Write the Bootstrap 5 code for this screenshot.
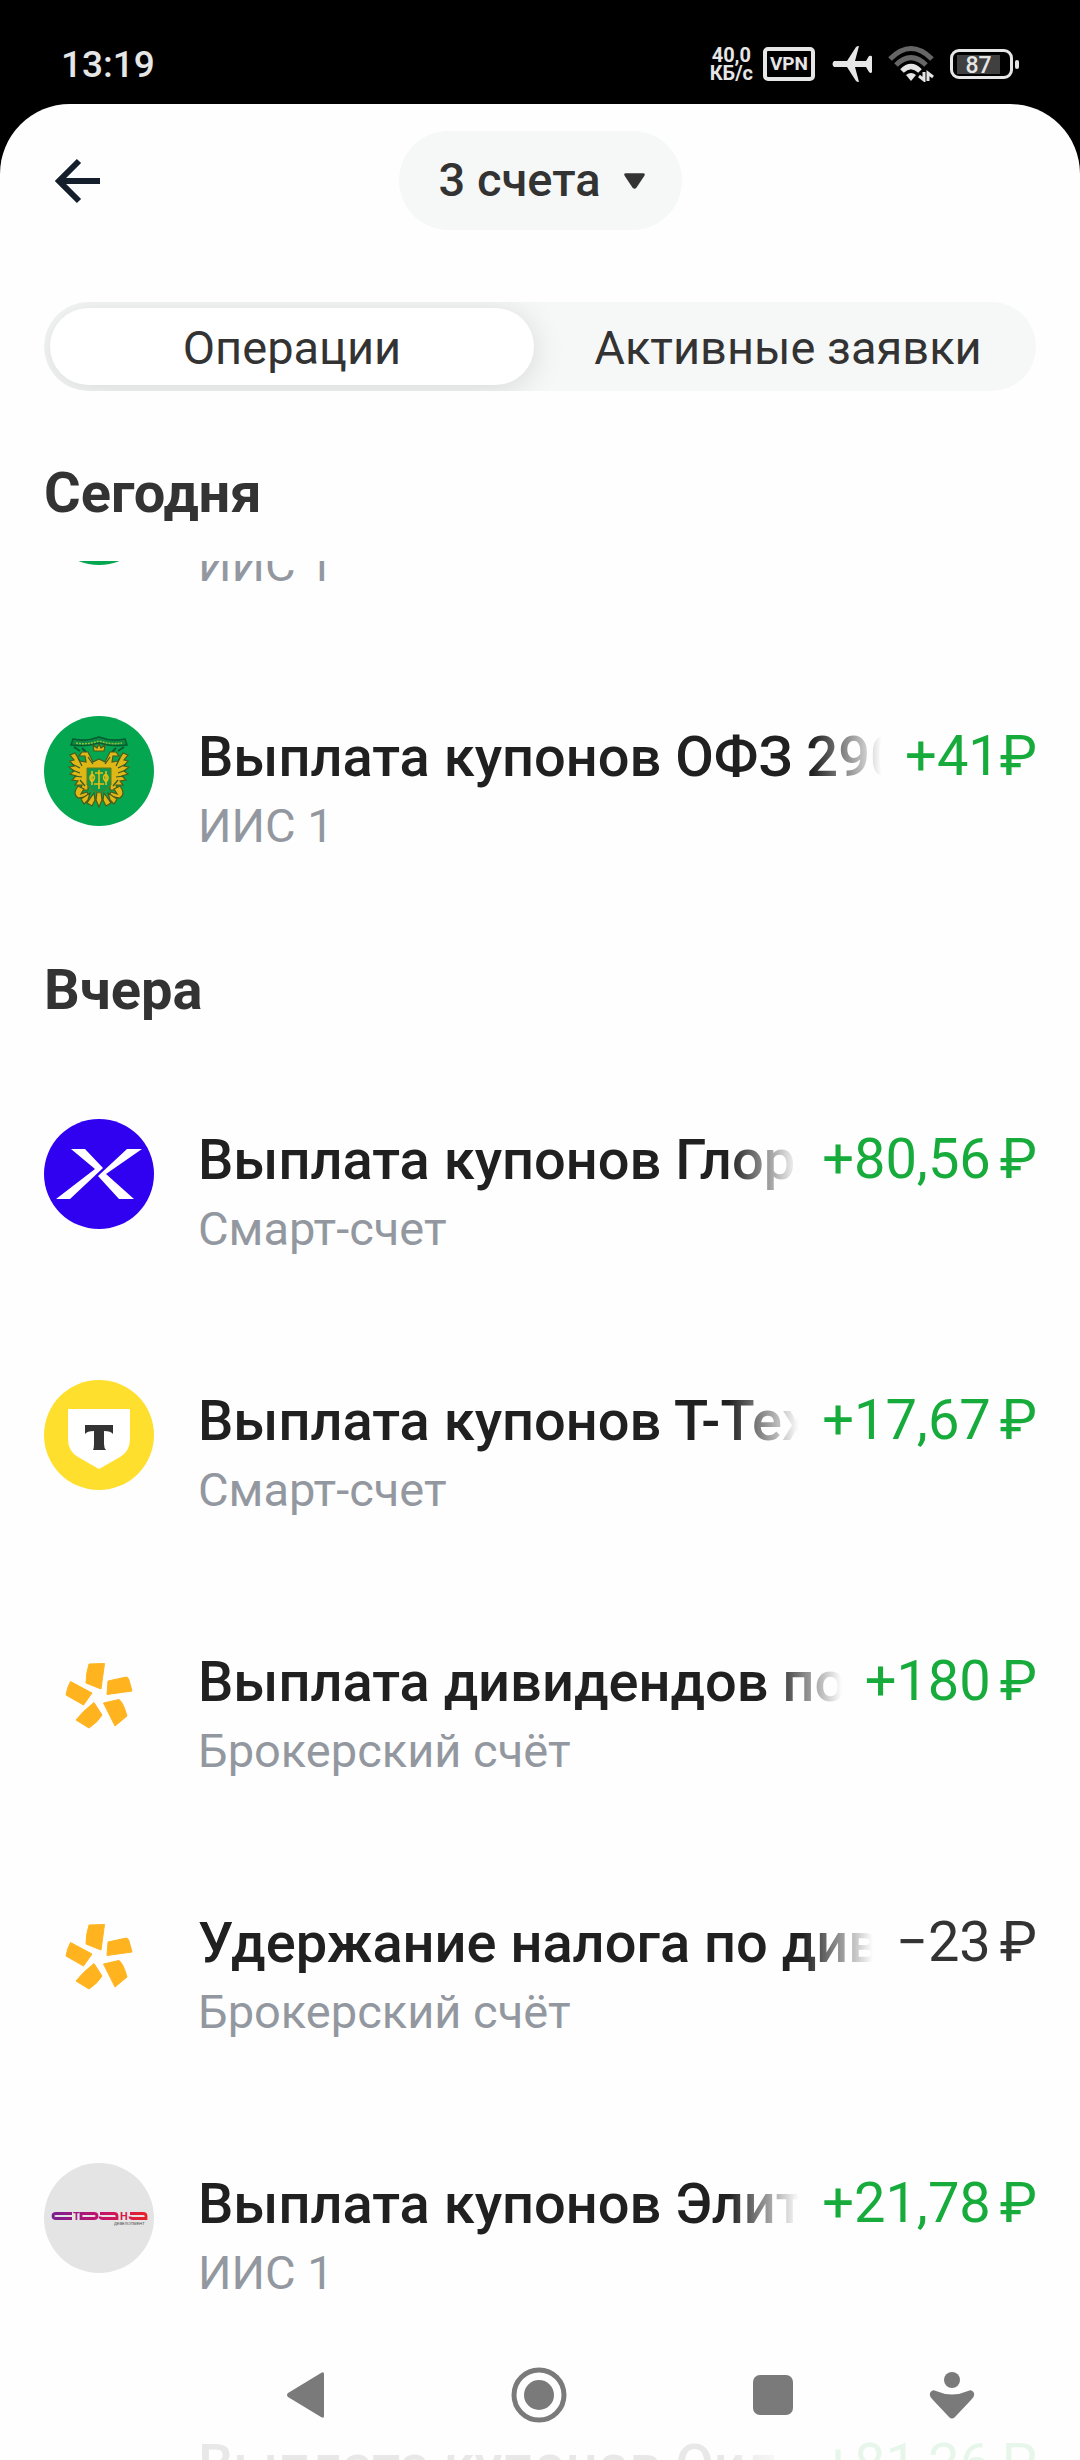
<!DOCTYPE html>
<html lang="ru">
<head>
<meta charset="utf-8">
<meta name="viewport" content="width=device-width, initial-scale=1">
<title>Операции</title>
<link href="https://cdn.jsdelivr.net/npm/bootstrap@5.3.0/dist/css/bootstrap.min.css" rel="stylesheet">
<style>
  body { font-family: Roboto, "Noto Sans", sans-serif; background: #000; color: #333; }
  svg { display: block; flex-shrink: 0; }
  .status-bar { height: 104px; padding: 46px 61px 0; color: #e6e6e6; }
  .clock { font-size: 37px; font-weight: 500; line-height: 38px; }
  .net-speed { font-size: 20px; font-weight: 700; line-height: 18px; margin-right: 10px; }
  .vpn-tag { width: 52px; height: 34px; border: 4px solid #e6e6e6; border-radius: 5px; font-size: 19px; font-weight: 700; line-height: 26px; }
  .battery { width: 63px; height: 30px; border: 3px solid #e6e6e6; border-radius: 9px; padding: 3px 4px; }
  .battery-fill { width: 43px; height: 19px; background: #404040; font-size: 23px; font-weight: 500; line-height: 21px; }
  .battery-tip { width: 4px; height: 9px; margin-left: 2px; border-radius: 2px; background: #e6e6e6; }
  .sheet { background: #fefefe; border-radius: 70px 70px 0 0; }
  .top-bar { display: grid; grid-template-columns: 1fr auto 1fr; padding: 27px 44px 0; }
  .back-btn { padding: 0 11px; }
  .account-btn { height: 99px; padding: 0 37px 0 40px; gap: 23px; background: #f6f8f7; font-size: 47px; font-weight: 500; color: #333; }
  .switch { margin: 72px 44px 0; height: 89px; padding: 6px; gap: 12px; background: #f6f8f7; }
  .switch .nav-link { height: 77px; padding: 0; font-size: 47px; line-height: 79px; color: #333; border-radius: 39px; }
  .switch .nav-link.active { background: #fff; color: #333; box-shadow: 0 4px 32px rgba(0, 0, 0, .13); }
  .day-title { font-size: 56px; font-weight: 700; line-height: 66px; margin: 0; padding: 42px 0 34px; }
  .day-title.pinned { padding: 69px 44px 35px; }
  .feed { padding: 0 43px 0 44px; }
  .feed > ul:first-child { margin-top: -168px; }
  .op { height: 261px; padding-top: 62px; gap: 44px; }
  .op-body { padding-top: 8px; min-width: 0; }
  .op-name { font-size: 56px; font-weight: 500; line-height: 66px; color: #202020; white-space: nowrap; overflow: hidden; min-width: 0;
    -webkit-mask-image: linear-gradient(to left, transparent, #000 70px); mask-image: linear-gradient(to left, transparent, #000 70px); }
  .op-line { gap: 23px; }
  .op-sum { font-size: 56px; line-height: 64px; white-space: nowrap; }
  .op-sum span { margin-left: 9px; }
  .plus { color: #17ab3c; }
  .op-account { font-size: 47px; line-height: 56px; margin-top: 8px; color: #9398a0; }
  .sys-nav { height: 130px; background: rgba(254, 254, 254, .9); }
  .sys-nav .btn { flex: 234 1 0; padding: 0; border: 0; }
  .sys-nav .btn:last-of-type { flex-grow: 124; }
  .sys-nav .edge-start { flex: 188 1 0; }
  .sys-nav .edge-end { flex: 66 1 0; }
</style>
</head>
<body>
<svg width="0" height="0" class="position-absolute" aria-hidden="true">
  <defs>
    <symbol id="petals" viewBox="0 0 110 110">
      <g fill="#ffb41f" stroke="#ffb41f" stroke-width="1" stroke-linejoin="round">
        <path d="M45 23L60.500 22.500L57 48L42 42Q42 32 45 23Z"/>
        <path d="M64 40L80 36.500Q84 35 85 39L88 50L63 53.500Z"/>
        <path d="M59.500 62L75 58.500Q79 61 83 75L71 85Z"/>
        <path d="M50 61.500L58 74Q54 81 45 87L32 79Q39 70 50 61.500Z"/>
        <path d="M26.500 40.500L48 52L39.500 64L22 54Q23 47 26.500 40.500Z"/>
      </g>
    </symbol>
    <symbol id="crest" viewBox="0 0 110 110">
      <circle cx="55" cy="55" r="55" fill="#05a650"/>
      <path d="M29 23Q42 26 55 21Q68 26 81 23L83 29Q69 31 55 27Q41 31 27 29Z" fill="#0b8a44" stroke="#075c30" stroke-width="1.500"/>
      <path d="M32 27Q43 29 55 25Q67 29 78 27" fill="none" stroke="#8fc23a" stroke-width="1.500" stroke-dasharray="2 1"/>
      <path d="M30 31L36 35M80 31L74 35M38 32L42 36M72 32L68 36" stroke="#075c30" stroke-width="2"/>
      <g fill="#dfb716" stroke="#4d5a1a" stroke-width="1.200">
        <path d="M50 35L49 29L53 32L55 28L57 32L61 29L60 35Z"/>
        <path d="M49 46L44 36L38 36L35 40L41 40L42 46L36 45L31 37L26 39L30 44L26 45L30 50L25 51L30 55L26 58L32 60L28 64L34 65L31 69L38 69L36 74L44 74L44 53L66 53L66 74L74 74L72 69L79 69L76 65L82 64L78 60L84 58L80 55L85 51L80 50L84 45L80 44L84 39L79 37L74 45L68 46L69 40L75 40L72 36L66 36L61 46L55 43Z"/>
        <path d="M34 70L40 73L37 78L43 76L45 80L34 82Q28 78 34 70ZM76 70L70 73L73 78L67 76L65 80L76 82Q82 78 76 70Z"/>
        <path d="M53 76L57 76L58 84L55 91L52 84ZM50 77L43 87L48 90L51 84ZM60 77L67 87L62 90L59 84ZM46 77L37 83L40 88L44 84ZM64 77L73 83L70 88L66 84Z"/>
      </g>
      <path d="M43 52H67V69Q62 75 55 77Q48 75 43 69Z" fill="#11984a" stroke="#6a7817" stroke-width="1"/>
      <path d="M55 54V73M48 55V69M62 55V69M48 58Q53 61 48 66Q44 62 48 58M62 58Q57 61 62 66Q66 62 62 58M51 57H59M50 68H60" fill="none" stroke="#e8bd12" stroke-width="1.600"/>
      <path d="M28 48L36 52M28 54L36 57M30 60L38 61M82 48L74 52M82 54L74 57M80 60L72 61M44 41L49 48M66 41L61 48M34 42L38 50M76 42L72 50M36 64L41 70M74 64L69 70" stroke="#31592a" stroke-width="1.200"/>
    </symbol>
  </defs>
</svg>

<div class="vh-100 d-flex flex-column overflow-hidden">
  <header class="status-bar flex-shrink-0 d-flex align-items-start justify-content-between">
    <span class="clock">13:19</span>
    <div class="d-flex align-items-center">
      <div class="net-speed text-center">40,0<br>КБ/с</div>
      <div class="vpn-tag text-center me-3">VPN</div>
      <svg class="me-3" width="41" height="36" viewBox="0 0 41 36" fill="#e6e6e6" aria-hidden="true"><path d="M3 15H16L25 1Q26 0 28 0L24 15H35L38 10Q41 9 41 11V26Q40 28 38 26L35 21H24L28 36Q26 36 25 35L16 21H3Q0 18 3 15Z"/></svg>
      <svg class="me-3" width="46" height="36" viewBox="0 0 46 36" fill="none" aria-hidden="true">
        <path d="M2 13Q23 -8 44 13" stroke="#666" stroke-width="5"/><path d="M8 19Q23 4 38 19" stroke="#666" stroke-width="5"/>
        <path d="M14 25Q23 16 32 25" stroke="#e6e6e6" stroke-width="5"/><path d="M18 29Q23 25 28 29L23 35Z" fill="#e6e6e6"/>
        <path d="M36 26V34L31 30M40 35V27L45 31" stroke="#e6e6e6" stroke-width="3"/>
      </svg>
      <div class="battery"><div class="battery-fill text-center">87</div></div>
      <div class="battery-tip"></div>
    </div>
  </header>

  <main class="sheet flex-grow-1 d-flex flex-column overflow-hidden">
    <div class="top-bar align-items-center">
      <button type="button" class="btn back-btn border-0 me-auto" aria-label="Назад">
        <svg width="46" height="46" viewBox="0 0 46 46" fill="none" stroke="#151f2c" stroke-width="6"><path d="M24 3L4 23L24 43M5 23H45"/></svg>
      </button>
      <button type="button" class="btn account-btn rounded-pill border-0 d-flex align-items-center">3 счета
        <svg width="21" height="16" viewBox="0 0 22 16" fill="#333" aria-hidden="true"><path d="M2 0H20Q23 0 21 3L13 15Q11 17 9 15L1 3Q-1 0 2 0Z"/></svg>
      </button>
    </div>

    <div class="switch nav nav-pills nav-fill flex-nowrap flex-shrink-0 rounded-pill overflow-hidden" role="tablist">
      <button type="button" class="nav-link active w-50" role="tab" aria-selected="true">Операции</button>
      <button type="button" class="nav-link w-50" role="tab" aria-selected="false">Активные заявки</button>
    </div>

    <h2 class="day-title pinned">Сегодня</h2>

    <section class="feed flex-grow-1 overflow-hidden">
      <ul class="list-unstyled mb-0">
        <li class="op d-flex align-items-start">
          <svg width="110" height="110"><use href="#crest"/></svg>
          <div class="op-body flex-grow-1">
            <div class="op-line d-flex justify-content-between"><div class="op-name">Выплата купонов ОФЗ 290</div><div class="op-sum plus">+41₽</div></div>
            <div class="op-account">ИИС 1</div>
          </div>
        </li>
        <li class="op d-flex align-items-start">
          <svg width="110" height="110"><use href="#crest"/></svg>
          <div class="op-body flex-grow-1">
            <div class="op-line d-flex justify-content-between"><div class="op-name">Выплата купонов ОФЗ 29006</div><div class="op-sum plus">+41₽</div></div>
            <div class="op-account">ИИС 1</div>
          </div>
        </li>
      </ul>

      <h2 class="day-title">Вчера</h2>
      <ul class="list-unstyled mb-0">
        <li class="op d-flex align-items-start">
          <svg width="110" height="110" viewBox="0 0 110 110"><circle cx="55" cy="55" r="55" fill="#3000f0"/><path fill="#fff" d="M27 30H41L59 49L26 80H12L51 50ZM83 30H98L62 55L90 80H75L54 57Z"/></svg>
          <div class="op-body flex-grow-1">
            <div class="op-line d-flex justify-content-between"><div class="op-name">Выплата купонов Глоракс</div><div class="op-sum plus">+80,56<span>₽</span></div></div>
            <div class="op-account">Смарт-счет</div>
          </div>
        </li>
        <li class="op d-flex align-items-start">
          <svg width="110" height="110" viewBox="0 0 110 110"><circle cx="55" cy="55" r="55" fill="#ffdf2d"/><path fill="#fff" d="M24 29H86V59Q86 71 76 77L55 89L34 77Q24 71 24 59Z"/><path fill="#333" d="M41 45H69V54Q67 51 60 51V64Q60 68 62 70H49Q50 68 50 64V51Q43 51 41 54Z"/></svg>
          <div class="op-body flex-grow-1">
            <div class="op-line d-flex justify-content-between"><div class="op-name">Выплата купонов Т-Технологии</div><div class="op-sum plus">+17,67<span>₽</span></div></div>
            <div class="op-account">Смарт-счет</div>
          </div>
        </li>
        <li class="op d-flex align-items-start">
          <svg width="110" height="110"><use href="#petals"/></svg>
          <div class="op-body flex-grow-1">
            <div class="op-line d-flex justify-content-between"><div class="op-name">Выплата дивидендов по акциям</div><div class="op-sum plus">+180<span>₽</span></div></div>
            <div class="op-account">Брокерский счёт</div>
          </div>
        </li>
        <li class="op d-flex align-items-start">
          <svg width="110" height="110"><use href="#petals"/></svg>
          <div class="op-body flex-grow-1">
            <div class="op-line d-flex justify-content-between"><div class="op-name">Удержание налога по дивидендам</div><div class="op-sum">−23<span>₽</span></div></div>
            <div class="op-account">Брокерский счёт</div>
          </div>
        </li>
        <li class="op d-flex align-items-start">
          <svg width="110" height="110" viewBox="0 0 110 110">
            <defs><linearGradient id="brand" gradientUnits="userSpaceOnUse" x1="8" y1="0" x2="103" y2="0"><stop offset="0" stop-color="#7a1f92"/><stop offset=".5" stop-color="#c3126e"/><stop offset="1" stop-color="#e8222a"/></linearGradient></defs>
            <circle cx="55" cy="55" r="55" fill="#e4e4e4"/>
            <g fill="none" stroke="url(#brand)" stroke-width="2.800">
              <path d="M28 50.500H12Q9 50.500 9 53Q9 55.500 12 55.500H28"/>
              <path d="M37 57V50.500H50Q53 50.500 53 53Q53 55.500 50 55.500H37"/>
              <path d="M56 50.500H70Q73 50.500 73 53V57M73 55.500H59Q56 55.500 56 53.500"/>
              <path d="M86 50.500H99Q102 50.500 102 53V57M102 55.500H89Q86 55.500 86 53.500"/>
            </g>
            <g fill="url(#brand)" font-family="Roboto, sans-serif" font-weight="700" font-size="11"><text x="29" y="57">Т</text><text x="76" y="57">Н</text></g>
            <text x="70" y="62" font-family="Liberation Sans, sans-serif" font-size="4" fill="#444">ДЕВЕЛОПМЕНТ</text>
          </svg>
          <div class="op-body flex-grow-1">
            <div class="op-line d-flex justify-content-between"><div class="op-name">Выплата купонов Элит Строй</div><div class="op-sum plus">+21,78<span>₽</span></div></div>
            <div class="op-account">ИИС 1</div>
          </div>
        </li>
        <li class="op d-flex align-items-start">
          <svg width="110" height="110" aria-hidden="true"></svg>
          <div class="op-body flex-grow-1">
            <div class="op-line d-flex justify-content-between"><div class="op-name">Выплата купонов Оил Ресурс</div><div class="op-sum plus">+81,26<span>₽</span></div></div>
            <div class="op-account">ИИС 1</div>
          </div>
        </li>
      </ul>
    </section>
  </main>
</div>

<nav class="sys-nav fixed-bottom d-flex align-items-center" aria-label="Система">
  <span class="edge-start"></span>
  <button type="button" class="btn d-flex justify-content-center" aria-label="Назад"><svg width="38" height="46" viewBox="0 0 38 46" fill="#7a7a7a"><path d="M35 1Q38 -1 38 2V44Q38 47 35 45L2 25Q0 23 2 21Z"/></svg></button>
  <button type="button" class="btn d-flex justify-content-center" aria-label="Домой"><svg width="56" height="56" viewBox="0 0 56 56"><circle cx="28" cy="28" r="25" fill="none" stroke="#7a7a7a" stroke-width="5"/><circle cx="28" cy="28" r="15" fill="#7a7a7a"/></svg></button>
  <button type="button" class="btn d-flex justify-content-center" aria-label="Недавние"><svg width="40" height="40" viewBox="0 0 40 40"><rect width="40" height="40" rx="7" fill="#7a7a7a"/></svg></button>
  <button type="button" class="btn d-flex justify-content-center" aria-label="Специальные возможности"><svg width="46" height="48" viewBox="0 0 46 48" fill="#7a7a7a"><circle cx="23" cy="9" r="8"/><path d="M7 20Q23 27 39 20Q43 18 45 22Q46 26 42 29L26 46Q23 49 20 46L4 29Q0 26 1 22Q3 18 7 20Z"/></svg></button>
  <span class="edge-end"></span>
</nav>
<script src="https://cdn.jsdelivr.net/npm/bootstrap@5.3.0/dist/js/bootstrap.bundle.min.js"></script>
</body>
</html>
